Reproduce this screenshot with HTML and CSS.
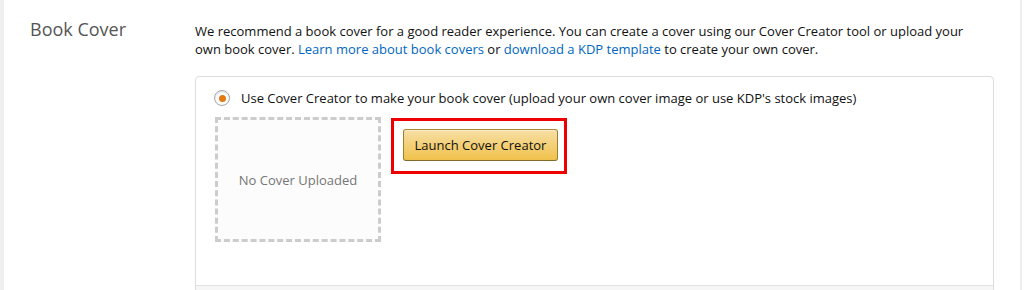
FILE: index.html
```html
<!DOCTYPE html>
<html lang="en">
<head>
    <meta name="viewport" content="width=device-width, initial-scale=1">
    <title>Book Cover</title>
    <link rel="stylesheet" href="styles.css">
</head>
<body>
    <div class="page">
        <div class="label-col">
            <h2>Book Cover</h2>
        </div>
        <div class="content-col">
            <p class="intro">We recommend a book cover for a good reader experience. You can create a cover using our Cover Creator tool or upload your own book cover. <a href="#">Learn more about book covers</a> or <a href="#">download a KDP template</a> to create your own cover.</p>
            <div class="panel">
                <div class="panel-body">
                    <label class="radio-row">
                        <span class="radio"><span class="dot"></span></span>
                        <span>Use Cover Creator to make your book cover (upload your own cover image or use KDP's stock images)</span>
                    </label>
                    <div class="cover-row">
                        <div class="cover-empty">No Cover Uploaded</div>
                        <div class="highlight">
                            <button type="button" class="btn">Launch Cover Creator</button>
                        </div>
                    </div>
                </div>
                <div class="panel-foot"></div>
            </div>
        </div>
    </div>
</body>
</html>
```

FILE: styles.css
```css
html, body, button {
    font-family: "Open Sans", "Noto Sans", Arial, sans-serif;
}
html, body {
    margin: 0;
    padding: 0;
    background: #fff;
    color: #111;
}
.page {
    display: flex;
    width: 1016px;
    height: 290px;
    border-left: 4px solid #eeeeee;
    border-right: 2px solid #eeeeee;
    overflow: hidden;
}
.label-col {
    width: 191px;
    flex: none;
}
.label-col h2 {
    margin: 17px 0 0 26px;
    font-size: 18px;
    line-height: 24px;
    font-weight: normal;
    color: #555;
}
.content-col {
    width: 799px;
    flex: none;
}
.intro {
    max-width: 780px;
    margin: 22px 0 0;
    font-size: 13px;
    line-height: 18px;
}
.intro a {
    color: #0066c0;
    text-decoration: none;
}
.panel {
    margin-top: 18px;
    border: 1px solid #dddddd;
    border-radius: 4px;
}
.panel-body {
    padding: 12px 18px 43px;
}
.radio-row {
    display: flex;
    align-items: center;
    gap: 11px;
    font-size: 13px;
    line-height: 18px;
}
.radio {
    width: 14px;
    height: 14px;
    border: 1px solid #a6a6a6;
    border-radius: 50%;
    background: #fff;
    box-shadow: 0 1px 2px rgba(0,0,0,.15) inset;
    display: flex;
    align-items: center;
    justify-content: center;
}
.dot {
    width: 7px;
    height: 7px;
    border-radius: 50%;
    background: #e47911;
}
.cover-row {
    display: flex;
    align-items: flex-start;
    gap: 10px;
    margin-top: 10px;
    margin-left: 1px;
}
.cover-empty {
    width: 160px;
    height: 119px;
    border: 3px dashed #cccccc;
    background: #fcfcfc;
    display: flex;
    align-items: center;
    justify-content: center;
    font-size: 13px;
    color: #767676;
}
.highlight {
    margin-top: 1px;
    width: 155px;
    height: 40px;
    padding: 8px 6px 2px 9px;
    border: 3px solid #ee0000;
}
.btn {
    width: 155px;
    height: 32px;
    border: 1px solid;
    border-color: #a88734 #9c7e31 #846a29;
    border-radius: 3px;
    background: linear-gradient(to bottom, #f7dfa5, #f0c14b);
    box-shadow: 0 1px 0 rgba(255,255,255,.4) inset;
    font-size: 13px;
    color: #111;
    padding: 0;
}
.panel-foot {
    height: 20px;
    border-top: 1px solid #e3e3e3;
    background: #f6f6f6;
}
```
